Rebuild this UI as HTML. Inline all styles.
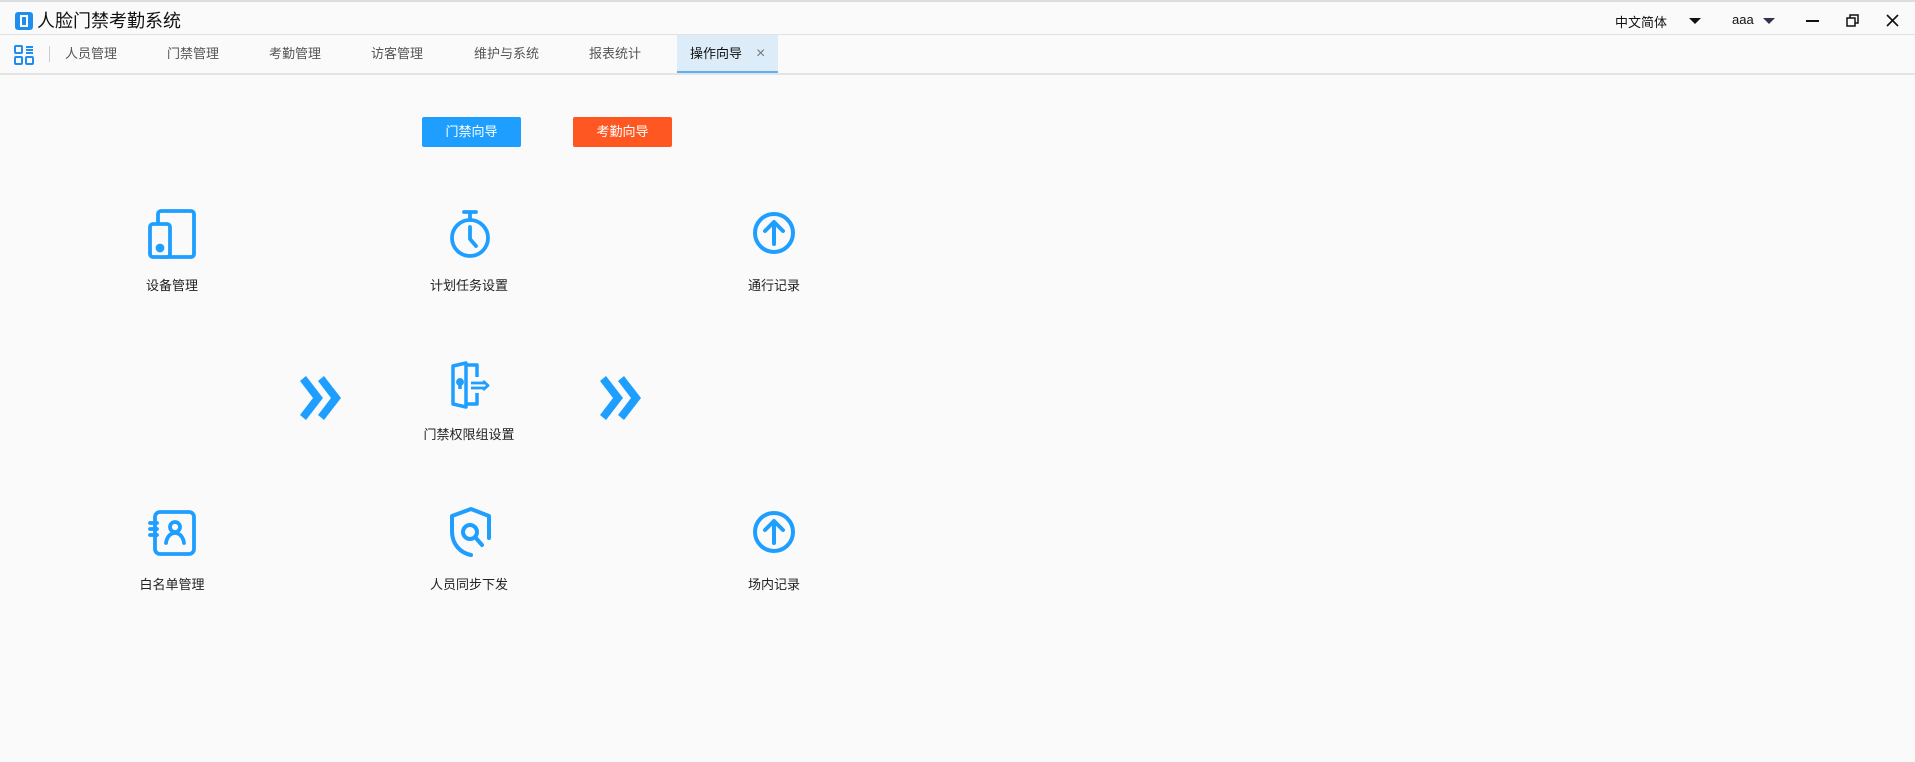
<!DOCTYPE html>
<html><head><meta charset="utf-8"><style>
*{margin:0;padding:0;box-sizing:border-box}
body{width:1915px;height:762px;background:#fafafa;font-family:"Liberation Sans","Noto Sans CJK SC",sans-serif;position:relative;overflow:hidden;color:#333}
.abs{position:absolute}
.top{left:0;top:0;width:1915px;height:35px;border-top:2px solid #ddd;border-bottom:1px solid #e2e2e2;background:#fafafa}
.tabs{left:0;top:35px;width:1915px;height:40px;border-bottom:2px solid #e4e4e4}
.tab{position:absolute;top:0;height:38px;line-height:38px;font-size:13px;color:#555}
.lbl{position:absolute;font-size:13px;color:#222;transform:translateX(-50%);white-space:nowrap}
.btn{position:absolute;top:117px;height:30px;width:99px;color:#fff;font-size:13px;text-align:center;line-height:30px;border-radius:2px}
svg{position:absolute}
</style></head><body>
<div class="abs top">
 <svg style="left:14px;top:9px" width="20" height="20" viewBox="0 0 20 20"><rect x="1" y="1" width="18" height="18" rx="3" fill="#1e8ff0"/><rect x="6" y="4" width="8" height="12" fill="#fff"/><rect x="8" y="6" width="4" height="8" fill="#1e8ff0"/></svg>
 <div class="abs" style="left:37px;top:5px;font-size:18px;color:#111">人脸门禁考勤系统</div>
 <div class="abs" style="left:1615px;top:10px;font-size:13px;color:#111">中文简体</div>
 <div class="abs" style="left:1689px;top:16px;border-left:6px solid transparent;border-right:6px solid transparent;border-top:6px solid #111"></div>
 <div class="abs" style="left:1732px;top:10px;font-size:13px;color:#111">aaa</div>
 <div class="abs" style="left:1763px;top:16px;border-left:6px solid transparent;border-right:6px solid transparent;border-top:6px solid #33334f"></div>
 <div class="abs" style="left:1806px;top:18px;width:13px;height:2px;background:#111"></div>
 <svg style="left:1846px;top:12px" width="13" height="13" viewBox="0 0 13 13" fill="none" stroke="#111" stroke-width="1.5"><rect x="1" y="4" width="8" height="8"/><path d="M4 4V1h8v8H9"/></svg>
 <svg style="left:1886px;top:12px" width="13" height="13" viewBox="0 0 13 13" stroke="#111" stroke-width="1.6"><path d="M1 1L12 12M12 1L1 12"/></svg>
</div>
<div class="abs tabs">
 <svg style="left:14px;top:10px" width="20" height="20" viewBox="0 0 20 20" fill="none" stroke="#1e8ff0" stroke-width="2"><rect x="1" y="1" width="7" height="7" rx="1"/><rect x="1" y="12" width="7" height="7" rx="1"/><rect x="12" y="12" width="7" height="7" rx="1"/><path d="M12 2h7M12 5h7M12 8h7"/></svg>
 <div class="abs" style="left:49px;top:11px;width:1px;height:16px;background:#ccc"></div>
 <div class="tab" style="left:65px">人员管理</div>
 <div class="tab" style="left:167px">门禁管理</div>
 <div class="tab" style="left:269px">考勤管理</div>
 <div class="tab" style="left:371px">访客管理</div>
 <div class="tab" style="left:474px">维护与系统</div>
 <div class="tab" style="left:589px">报表统计</div>
 <div class="tab" style="left:677px;width:101px;background:#dcecf8;border-bottom:2px solid #5fb0f0;color:#111;padding-left:13px">操作向导<span style="position:absolute;left:79px;color:#777;font-size:16px">×</span></div>
</div>
<div class="btn" style="left:422px;background:#1e9fff">门禁向导</div>
<div class="btn" style="left:573px;background:#ff5722">考勤向导</div>

<svg style="left:148px;top:208px" width="50" height="52" viewBox="0 0 50 52" fill="none" stroke="#1e9fff" stroke-width="3.8" stroke-linejoin="round"><rect x="10" y="3" width="36" height="46" rx="3"/><rect x="2" y="16" width="20" height="33" rx="3" fill="#fafafa"/><circle cx="12" cy="40" r="2.5" fill="#1e9fff"/></svg>
<div class="lbl" style="left:172px;top:275px">设备管理</div>
<svg style="left:447px;top:209px" width="46" height="50" viewBox="0 0 46 50" fill="none" stroke="#1e9fff" stroke-width="3.8" stroke-linecap="round"><path d="M17 3h12M23 3v7"/><circle cx="23" cy="29" r="18"/><path d="M23 18v12l6 7"/></svg>
<div class="lbl" style="left:469px;top:275px">计划任务设置</div>
<svg style="left:749px;top:210px" width="50" height="46" viewBox="0 0 50 46" fill="none" stroke="#1e9fff" stroke-width="4" stroke-linecap="round" stroke-linejoin="round"><circle cx="25" cy="23" r="19"/><path d="M25 34V13M16 21l9-9 9 9"/></svg>
<div class="lbl" style="left:774px;top:275px">通行记录</div>

<svg style="left:298px;top:376px" width="48" height="44" viewBox="0 0 48 44" fill="#1e9fff"><path d="M2 5l6-5 17 22-17 22-6-5 13-17z"/><path d="M20 5l6-5 17 22-17 22-6-5 13-17z"/></svg>
<svg style="left:598px;top:376px" width="48" height="44" viewBox="0 0 48 44" fill="#1e9fff"><path d="M2 5l6-5 17 22-17 22-6-5 13-17z"/><path d="M20 5l6-5 17 22-17 22-6-5 13-17z"/></svg>
<svg style="left:450px;top:360px" width="46" height="50" viewBox="0 0 46 50" fill="none" stroke="#1e9fff" stroke-width="3.5" stroke-linejoin="round"><path d="M3 6l13-3v44l-13-3z"/><path d="M16 5h11v12M27 33v11H16"/><circle cx="10" cy="22" r="2.2" fill="#1e9fff"/><path d="M10 24v5"/><path d="M21 23h14M21 28h14M33 21l5 4.5-5 4.5" stroke-width="2.8"/></svg>
<div class="lbl" style="left:469px;top:424px">门禁权限组设置</div>

<svg style="left:148px;top:509px" width="50" height="48" viewBox="0 0 50 48" fill="none" stroke="#1e9fff" stroke-width="3.8" stroke-linejoin="round" stroke-linecap="round"><rect x="7" y="3" width="39" height="42" rx="5"/><path d="M2 14h7M2 20h7M2 26h7"/><circle cx="27" cy="18" r="5"/><path d="M18 34c1-7 5-10 9-10s8 3 9 10"/></svg>
<div class="lbl" style="left:172px;top:574px">白名单管理</div>
<svg style="left:447px;top:506px" width="48" height="52" viewBox="0 0 48 52" fill="none" stroke="#1e9fff" stroke-width="4" stroke-linecap="round" stroke-linejoin="round"><path d="M42 32V10L24 3 5 10v15c0 14 9 22 19 24"/><circle cx="23" cy="26" r="7"/><path d="M28 31l7 8"/></svg>
<div class="lbl" style="left:469px;top:574px">人员同步下发</div>
<svg style="left:749px;top:509px" width="50" height="46" viewBox="0 0 50 46" fill="none" stroke="#1e9fff" stroke-width="4" stroke-linecap="round" stroke-linejoin="round"><circle cx="25" cy="23" r="19"/><path d="M25 34V13M16 21l9-9 9 9"/></svg>
<div class="lbl" style="left:774px;top:574px">场内记录</div>
</body></html>
